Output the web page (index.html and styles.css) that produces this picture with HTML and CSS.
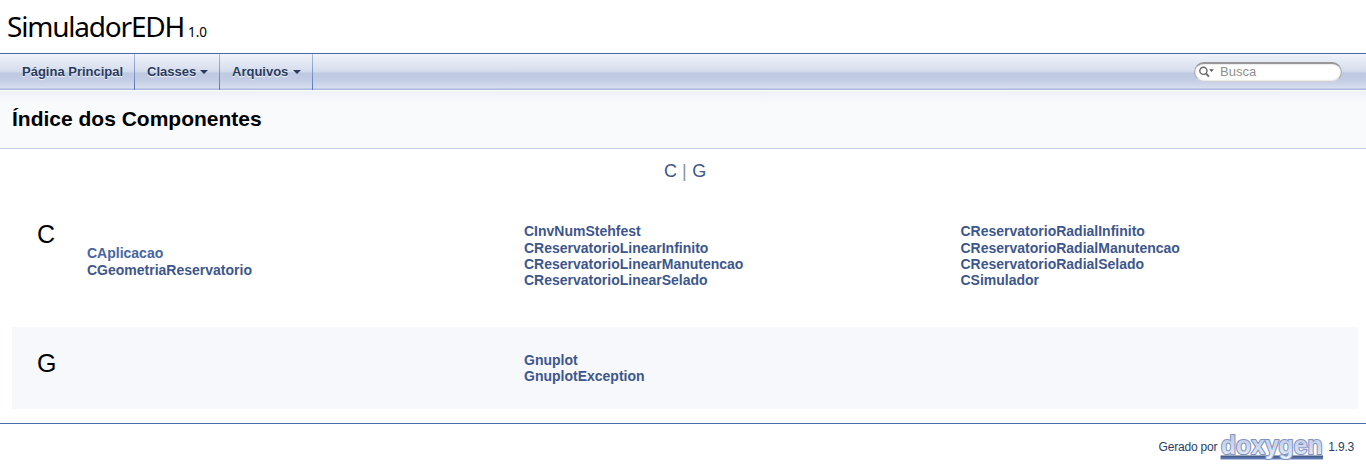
FILE: index.html
```html
<!DOCTYPE html>
<html lang="pt-BR">
<head>
<meta charset="utf-8">
<title>SimuladorEDH: Índice dos Componentes</title>
<link rel="stylesheet" href="styles.css">
</head>
<body>
<header class="project"><span class="name">SimuladorEDH</span><span class="version">1.0</span></header>
<nav class="menu">
  <a class="item" href="#"><span class="label home">Página Principal</span></a>
  <a class="item" href="#"><span class="label classes">Classes</span><i class="arrow"></i></a>
  <a class="item" href="#"><span class="label files">Arquivos</span><i class="arrow"></i></a>
  <div class="search">
    <svg class="mag" width="17" height="12" viewBox="0 0 17 12"><circle cx="4.4" cy="4.8" r="3.6" fill="none" stroke="#666" stroke-width="1.4"/><path d="M7.1 7.6 9.9 10.6" stroke="#666" stroke-width="1.8"/><path d="M10.2 3.3h4.6L12.5 6z" fill="#555"/></svg>
    <span class="hint">Busca</span>
  </div>
</nav>
<div class="heading"><h1>Índice dos Componentes</h1></div>
<main>
  <div class="letters"><a href="#">C</a><span class="bar">|</span><a href="#">G</a></div>
  <section class="group first">
    <div class="col"><h2>C</h2><ul><li><a class="hover" href="#">CAplicacao</a></li><li><a href="#">CGeometriaReservatorio</a></li></ul></div>
    <ul class="col"><li><a href="#">CInvNumStehfest</a></li><li><a href="#">CReservatorioLinearInfinito</a></li><li><a href="#">CReservatorioLinearManutencao</a></li><li><a href="#">CReservatorioLinearSelado</a></li></ul>
    <ul class="col"><li><a href="#">CReservatorioRadialInfinito</a></li><li><a href="#">CReservatorioRadialManutencao</a></li><li><a href="#">CReservatorioRadialSelado</a></li><li><a href="#">CSimulador</a></li></ul>
  </section>
  <section class="group second">
    <div class="col"><h2>G</h2></div>
    <ul class="col"><li><a href="#">Gnuplot</a></li><li><a href="#">GnuplotException</a></li></ul>
  </section>
</main>
<footer>
  <span class="made">Gerado por</span>
  <svg class="logo" width="104" height="31" viewBox="0 0 104 31">
    <defs><linearGradient id="fill" x1="0" y1="0" x2="0" y2="1"><stop offset="0" stop-color="#b9c8e6"/><stop offset=".5" stop-color="#cbd6ec"/><stop offset="1" stop-color="#edf1f9"/></linearGradient>
    <linearGradient id="line" x1="0" y1="0" x2="0" y2="1"><stop offset="0" stop-color="#3c4f7c"/><stop offset="1" stop-color="#6b88c6"/></linearGradient></defs>
    <rect x="0.5" y="23.5" width="102.5" height="4" fill="url(#line)"/>
    <text class="wordmark" x="1" y="21.8" textLength="101.5" lengthAdjust="spacingAndGlyphs">doxygen</text>
  </svg>
  <span class="release">1.9.3</span>
</footer>
</body>
</html>
```
FILE: styles.css
```css
* { box-sizing: border-box; }
body { margin: 0; height: 468px; overflow: hidden; background: #fff; color: #000; font: 14px "Liberation Sans", Arial, sans-serif; }
a { color: #3d578c; text-decoration: none; }
h1, h2, ul { margin: 0; padding: 0; }
ul { list-style: none; }

.project { height: 53px; padding: 7px 0 0 7px; display: flex; align-items: baseline; font-family: "Noto Sans", sans-serif; line-height: 38px; }
.name { font-size: 28px; width: 181px; letter-spacing: -1.2px; }
.version { font-size: 13.5px; letter-spacing: 0; }

.menu { height: 38px; display: flex; padding-left: 10px; border-top: 1px solid #4a6aaa; border-bottom: 1px solid #fff; background: linear-gradient(#f0f3f9 0, #d7deed 16px, #d2daeb 18px, #bdc9e2 19px, #c4cee5 27px, #d7dfef 34px, #a9b9dc 35px, #a9b9dc 36px); }
.item { height: 36px; display: flex; align-items: center; padding: 0 11px 0 12px; color: #283a5d; font-weight: bold; font-size: 13px; text-shadow: 0 1px 1px rgba(255,255,255,.9); border-right: 1px solid; border-image: linear-gradient(#afbee0, #5873b4) 1; }
.label { white-space: nowrap; padding-bottom: 2px; }
.home { width: 101px; }
.classes { width: 49px; }
.files { width: 57px; }
.arrow { border: 4px solid transparent; border-top-color: #283a5d; border-bottom: 0; margin-left: 4px; }
.search { margin: 8px 24px 0 auto; width: 148px; height: 20px; display: flex; align-items: center; padding: 0 0 2px 4px; border-radius: 10px; border: 1px solid #aaa; border-top: 2px solid #989898; border-bottom-color: #d0d0d0; background: #fff; box-shadow: inset 0 0 2px #bbb; }
.hint { margin-left: 4px; color: #909090; font-size: 13px; }

.heading { height: 58px; padding: 15px 12px; background: linear-gradient(#eef1f7, #f9fafc 12px); border-bottom: 1px solid #c4cfe5; }
h1 { font-size: 21px; line-height: 26px; }

main { height: 274px; padding: 0 8px 0 12px; }
.letters { height: 58px; padding: 12px 0 0 652px; display: flex; font-size: 18px; line-height: 21px; }
.bar { color: #8592ae; margin: 0 5.5px 0 5px; }
.group { display: grid; grid-template-columns: 437px 436.5px 1fr; padding: 16px 0 0 25px; }
.first { height: 120px; }
.second { height: 82px; background: #f7f8fc; padding-top: 25px; }
.col { margin-left: 50px; font-weight: bold; line-height: 16px; }
.first li:first-child { height: 17px; }
div.col { margin-left: 0; }
div.col ul { margin-left: 50px; }
h2 { font-size: 25px; font-weight: normal; line-height: 23px; }
.first h2 { height: 22px; }
.hover { color: #4665a2; }

footer { height: 45px; border-top: 1px solid #4a6aaa; display: flex; justify-content: flex-end; align-items: center; padding: 2px 12px 0 0; color: #2a3d61; font-size: 12px; }
.made { letter-spacing: -0.2px; }
.release { letter-spacing: -0.2px; }
.logo { margin: 0 4px 0 3px; overflow: visible; }
.wordmark { font: bold 26px "Liberation Sans", sans-serif; fill: url(#fill); stroke: #7e93c2; stroke-width: 2.2; stroke-linejoin: round; paint-order: stroke; }
```
